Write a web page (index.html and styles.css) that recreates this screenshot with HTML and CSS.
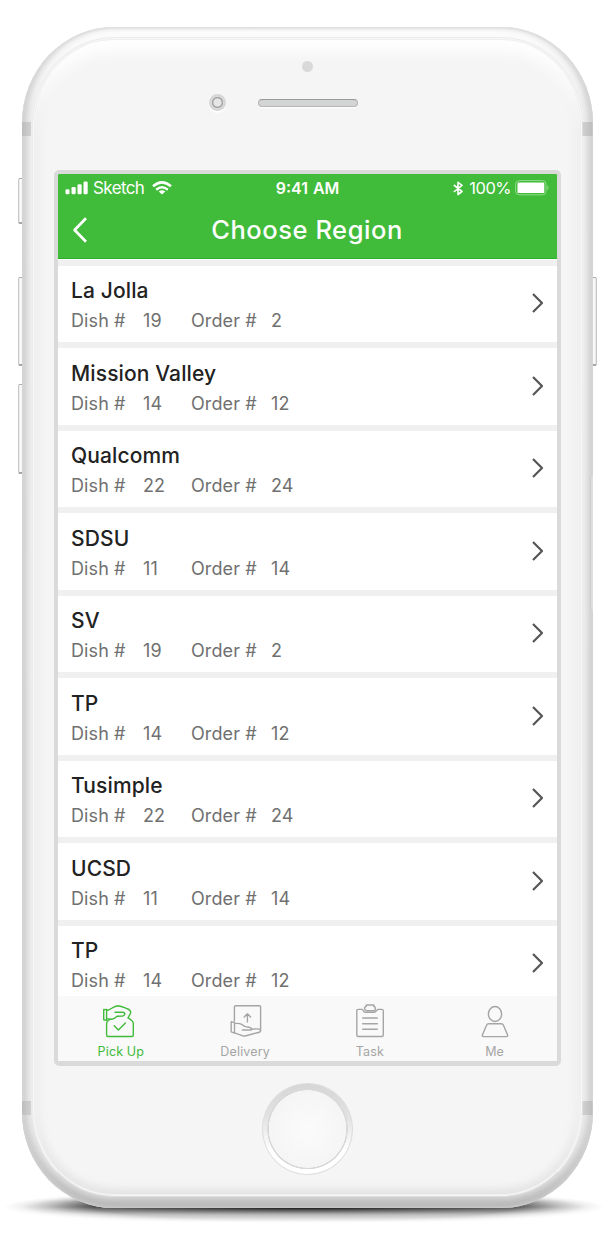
FILE: index.html
```
<!DOCTYPE html>
<html lang="en">
<head>
<meta charset="utf-8">
<title>Choose Region</title>
<link rel="stylesheet" href="styles.css">
</head>
<body>
<div class="ground-shadow"></div>
<span class="key key-mute"></span><span class="key key-up"></span><span class="key key-down"></span><span class="key key-power"></span>
<div class="phone">
  <span class="band band-tl"></span><span class="band band-tr"></span><span class="band band-bl"></span><span class="band band-br"></span>
  <div class="face"></div>
  <span class="side-recess"></span>
  <span class="sensor"></span><span class="camera"></span><span class="speaker"></span>
  <main class="screen">
    <header class="top">
      <div class="status">
        <div class="status-left">
          <svg width="23" height="14" viewBox="0 0 23 14" fill="#fff"><rect x="0.5" y="8.2" width="4" height="5" rx="1.3"/><rect x="6.5" y="6" width="4.2" height="7.2" rx="1.3"/><rect x="12.5" y="3.2" width="4.2" height="10" rx="1.3"/><rect x="18.5" y="0.6" width="4.2" height="12.6" rx="1.3"/></svg>
          <span class="carrier">Sketch</span>
          <svg class="wifi" width="20" height="14" viewBox="0 0 20 14" fill="none" stroke="#fff" stroke-width="2.5"><path d="M1 5.3Q10-2.5 19 5.3"/><path d="M4.2 8.7Q10 3.9 15.8 8.7"/><path d="M6.7 10.4Q10 8 13.3 10.4L10 13.5Z" fill="#fff" stroke="none"/></svg>
        </div>
        <span class="clock">9:41 AM</span>
        <div class="status-right">
          <svg width="10" height="15" viewBox="0 0 10 15" fill="none" stroke="#fff" stroke-width="1.6"><path d="M.8 4 9 10.5 5 13.5V1.4L9 4.4.8 11"/></svg>
          <span class="percent">100%</span>
          <svg width="35" height="16" viewBox="0 0 35 16"><rect x=".6" y=".6" width="30.4" height="14.2" rx="3.6" fill="none" stroke="#8fdc8c" stroke-width="1"/><rect x="2.5" y="2.5" width="26.8" height="10.6" rx="1.2" fill="#fff"/><path d="M32.3 5.2Q34.8 7.7 32.3 10.2Z" fill="#8fdc8c"/></svg>
        </div>
      </div>
      <div class="nav">
        <svg class="back" width="16" height="26" viewBox="0 0 16 26" fill="none" stroke="#fff" stroke-width="2.7"><path d="M14 1.2 2.6 13 14 24.8"/></svg>
        <h1>Choose Region</h1>
      </div>
    </header>
    <section class="list">
      <article class="row"><div><h2>La Jolla</h2><p><span class="dish">Dish #</span><span class="count">19</span><span class="order">Order #</span><span>2</span></p></div><svg class="chev" viewBox="0 0 12 20"><path d="M1 1 10 10 1 19"/></svg></article>
      <article class="row"><div><h2>Mission Valley</h2><p><span class="dish">Dish #</span><span class="count">14</span><span class="order">Order #</span><span>12</span></p></div><svg class="chev" viewBox="0 0 12 20"><path d="M1 1 10 10 1 19"/></svg></article>
      <article class="row"><div><h2>Qualcomm</h2><p><span class="dish">Dish #</span><span class="count">22</span><span class="order">Order #</span><span>24</span></p></div><svg class="chev" viewBox="0 0 12 20"><path d="M1 1 10 10 1 19"/></svg></article>
      <article class="row"><div><h2>SDSU</h2><p><span class="dish">Dish #</span><span class="count">11</span><span class="order">Order #</span><span>14</span></p></div><svg class="chev" viewBox="0 0 12 20"><path d="M1 1 10 10 1 19"/></svg></article>
      <article class="row"><div><h2>SV</h2><p><span class="dish">Dish #</span><span class="count">19</span><span class="order">Order #</span><span>2</span></p></div><svg class="chev" viewBox="0 0 12 20"><path d="M1 1 10 10 1 19"/></svg></article>
      <article class="row"><div><h2>TP</h2><p><span class="dish">Dish #</span><span class="count">14</span><span class="order">Order #</span><span>12</span></p></div><svg class="chev" viewBox="0 0 12 20"><path d="M1 1 10 10 1 19"/></svg></article>
      <article class="row"><div><h2>Tusimple</h2><p><span class="dish">Dish #</span><span class="count">22</span><span class="order">Order #</span><span>24</span></p></div><svg class="chev" viewBox="0 0 12 20"><path d="M1 1 10 10 1 19"/></svg></article>
      <article class="row"><div><h2>UCSD</h2><p><span class="dish">Dish #</span><span class="count">11</span><span class="order">Order #</span><span>14</span></p></div><svg class="chev" viewBox="0 0 12 20"><path d="M1 1 10 10 1 19"/></svg></article>
      <article class="row"><div><h2>TP</h2><p><span class="dish">Dish #</span><span class="count">14</span><span class="order">Order #</span><span>12</span></p></div><svg class="chev" viewBox="0 0 12 20"><path d="M1 1 10 10 1 19"/></svg></article>
    </section>
    <nav class="tabs">
      <a class="tab active"><svg viewBox="0 0 34 34"><path d="M1.7 5.8 4.6 5.4V16.2L1.7 15.7Z M4.6 6.5C9 6 11 2 16 1.8 20 2.2 23 4 26 5 28 6 29 7.7 28.6 9L26 14M13 8.3H20.5C24 8.7 23.3 11.4 20.8 12L15 12.3C13.2 14.2 12 15 9.8 15.2L4.7 14.6M7.8 15.2 5.6 17.3Q4.6 18.2 4.6 19.5V31Q4.6 32.5 6 32.5H29.9Q31.3 32.5 31.3 31V19.5Q31.3 17.8 30 16.8L26 13.6M12.2 21.7 16.4 25.9 23.4 18.9"/></svg><span>Pick Up</span></a>
      <a class="tab"><svg viewBox="0 0 34 34"><path d="M5.4 17V3Q5.4 1.8 6.6 1.8H30.4Q31.6 1.8 31.6 3V25.5M18.4 18V10M15.2 13 18.4 9.8 21.6 13M2.2 17.7 5.5 18.7V29.1L2.2 27.8ZM5.5 19.6Q10 18.9 13.2 20.7 16 23.5 20 23.3 23.2 23.8 22.3 26H13.4M22.5 25.3Q29.5 24.2 31.7 26.1 32 28.3 28 28.8L17 31.8Q14.5 32.5 12 31.1L5.5 28.9"/></svg><span>Delivery</span></a>
      <a class="tab"><svg viewBox="0 0 34 34"><path d="M10.2 7.8 8.4 5.4H4.3Q2.8 5.4 2.8 6.9V31Q2.8 32.5 4.3 32.5H27.8Q29.3 32.5 29.3 31V6.9Q29.3 5.4 27.8 5.4H23.7L21.3 7.8Q20.5 8.3 19.5 8.3H12.5Q11.2 8.3 10.2 7.8M12.3 1H19.7V2.4H20.4Q21.6 3.4 21.3 5.2 20.8 6.6 19.7 6.6H12.3Q10.8 6.4 10.6 4.7 10.6 2.5 12.3 2.4ZM8.7 14H23.3M8.7 19.7H23.3M8.7 25.3H23.3"/></svg><span>Task</span></a>
      <a class="tab"><svg viewBox="0 0 34 34"><ellipse cx="17" cy="10" rx="6.6" ry="7.5"/><path d="M11 19.8H23Q25 19.8 25.7 21.7L29.6 31Q30 32.6 28.6 32.6H5.4Q4 32.6 4.4 31L8.3 21.7Q9 19.8 11 19.8Z"/></svg><span>Me</span></a>
    </nav>
  </main>
  <div class="home"></div>
</div>
</body>
</html>
```
FILE: styles.css
```
* { box-sizing: border-box; }
body { margin: 0; width: 608px; height: 1241px; padding: 27px 0 0 21.5px; position: relative; overflow: hidden; background: #fff; font-family: Inter, "Liberation Sans", sans-serif; }
h1, h2, p { margin: 0; font-weight: 400; }
svg { display: block; flex: none; }
svg path, svg ellipse { stroke-linejoin: round; }

/* Device */
.ground-shadow { position: absolute; left: 4px; top: 1188px; width: 600px; height: 38px; background: radial-gradient(ellipse closest-side, #000 0, rgba(0,0,0,.8) 45%, rgba(0,0,0,.68) 70%, rgba(0,0,0,.25) 85%, rgba(0,0,0,.06) 94%, transparent); -webkit-mask: linear-gradient(transparent, #000 35%, #000 50%, rgba(0,0,0,.35) 70%, transparent 92%); mask: linear-gradient(transparent, #000 35%, #000 50%, rgba(0,0,0,.35) 70%, transparent 92%); }
.phone { position: relative; width: 571px; height: 1181px; padding: 143px 0 0 32.5px; border-radius: 92px / 96px; overflow: hidden; background: linear-gradient(#fcfcfc, #f0f0f0 80px, #ededed 1080px, #dedede); box-shadow: inset 0 1px 2px #ddd, inset 5px 0 6px -1px #d2d2d2, inset -5px 0 6px -1px #d2d2d2, inset 0 -8px 10px #b0b0b0; }
.face { position: absolute; inset: 9.5px 10px 11px; border: 1px solid #ececec; border-bottom-color: #dcdcdc; border-radius: 82px / 87px; background: #f5f5f5; box-shadow: inset 0 0 0 1px #f7f7f7, inset 0 0 0 2px #efefef, inset 0 16px 16px -3px #fff, inset 8px 0 12px -3px #ebebeb, inset -8px 0 12px -3px #ebebeb, inset 0 -6px 10px #dedede; }
.band { position: absolute; width: 9.5px; height: 14px; background: linear-gradient(90deg, #bdbdbd, #d1d1d1); z-index: 1; }
.band-tl { left: 0; top: 94.5px; }
.band-tr { right: 0; top: 94.5px; transform: scaleX(-1); }
.band-bl { left: 0; top: 1074px; }
.band-br { right: 0; top: 1074px; transform: scaleX(-1); }
.side-recess { position: absolute; right: 0; top: 449px; width: 3px; height: 135px; border-radius: 3px 0 0 3px; border-left: 1px solid #cfcfcf; background: #dedede; }
.key { position: absolute; width: 6px; border: 1px solid #c8c8c8; border-top-color: #aaa; border-bottom: 2px solid #a5a5a5; border-radius: 2px; background: linear-gradient(90deg, #e4e4e4, #fff 45%, #e2e2e2); }
.key-mute { left: 18px; top: 178px; height: 46px; }
.key-up { left: 18px; top: 277px; height: 89px; }
.key-down { left: 18px; top: 384px; height: 90px; }
.key-power { left: 591px; top: 277px; height: 89px; }
.sensor { position: absolute; left: 280.5px; top: 34px; width: 11px; height: 11px; border-radius: 50%; background: #d9d9d9; }
.camera { position: absolute; left: 187px; top: 67px; width: 17px; height: 17px; border-radius: 50%; border: 2.5px solid #d6d6d6; background: radial-gradient(circle, #e6e6e6 0 3.7px, #a5a5a5 4.5px 5.2px, #ddd 6px); box-shadow: 0 2px 2px #fff; }
.speaker { position: absolute; left: 236.5px; top: 72px; width: 100px; height: 8px; border: 1px solid #b5b5b5; border-top: 1.5px solid #989898; border-radius: 4px; background: #d2d5d4; box-shadow: 0 1px 1px #fff; }
.home { position: absolute; left: 240.5px; top: 1056px; width: 91px; height: 92px; border: 1px solid #dedede; border-radius: 50%; background: radial-gradient(circle, #fbfbfb 0, #f5f5f5 38.5px, #d9d9d9 39px 40px, transparent 40.5px), linear-gradient(#d6d6d6, #e1e1e1 35%, #fff 75%); }

/* Screen */
.screen { position: relative; width: 507px; height: 896px; border: 4px solid #dadada; border-bottom-width: 5px; border-radius: 5px; box-shadow: 0 0 1px #fff; display: flex; flex-direction: column; overflow: hidden; background: #fff; }
.top { height: 85px; flex: none; background: #41bb3a; color: #fff; border-bottom: 1px solid #28b124; }
.status { height: 28px; display: grid; grid-template-columns: 1fr auto 1fr; align-items: center; padding: 0 7px; }
.status-left, .status-right { display: flex; align-items: center; }
.status-right { justify-content: flex-end; }
.carrier { margin-left: 5px; font-size: 17px; letter-spacing: -0.6px; }
.wifi { margin-left: 8px; }
.clock { font-size: 16px; font-weight: 600; word-spacing: 1px; }
.percent { margin: 0 4px 0 6px; font-size: 16.5px; letter-spacing: -0.5px; }
.nav { height: 54px; position: relative; display: flex; align-items: center; justify-content: center; }
.back { position: absolute; left: 14px; top: 15px; }
.nav h1 { font-size: 25.5px; font-weight: 500; letter-spacing: 0.55px; margin-right: 1px; }
.list { flex: 1; min-height: 0; overflow: hidden; background: linear-gradient(#fff 0 2px, #f0f0f0 2px 4px, #fff 4px); }
.row { height: 82.5px; border-top: 6px solid #f0f0f0; display: flex; justify-content: space-between; align-items: center; padding: 0 13px 1px; }
.row:first-child { height: 83px; border-top: 0; padding-top: 6.5px; background: linear-gradient(#fff 0 1px, #f0f0f0 1px 6.5px, #fff 6.5px); }
.row > div { padding-top: 6px; }
.row h2 { font-size: 21px; line-height: 28px; font-weight: 500; letter-spacing: 0.12px; color: #222; }
.row p { display: flex; font-size: 18px; line-height: 28px; margin-top: 2px; color: #707070; letter-spacing: 0.1px; }
.dish { width: 72px; }
.count { width: 48px; }
.order { width: 80px; }
.chev { width: 12px; height: 20px; fill: none; stroke: #555; stroke-width: 2.2; }
.tabs { height: 65px; flex: none; display: grid; grid-template-columns: repeat(4, 1fr); background: #f9f9f9; }
.tab { display: flex; flex-direction: column; align-items: center; padding: 8px 0 0; color: #a5a5a5; font-size: 12.5px; line-height: 16px; letter-spacing: 0.15px; }
.tab svg { width: 34px; height: 34px; margin-left: 1px; fill: none; stroke: currentColor; stroke-width: 1.4; stroke-linecap: round; }
.tab:nth-child(3) svg { margin-left: 2px; }
.tab span { margin-top: 6px; }
.tab.active { color: #41bb3a; padding-left: 1px; }
.tab.active svg { margin-left: -3px; }
```
